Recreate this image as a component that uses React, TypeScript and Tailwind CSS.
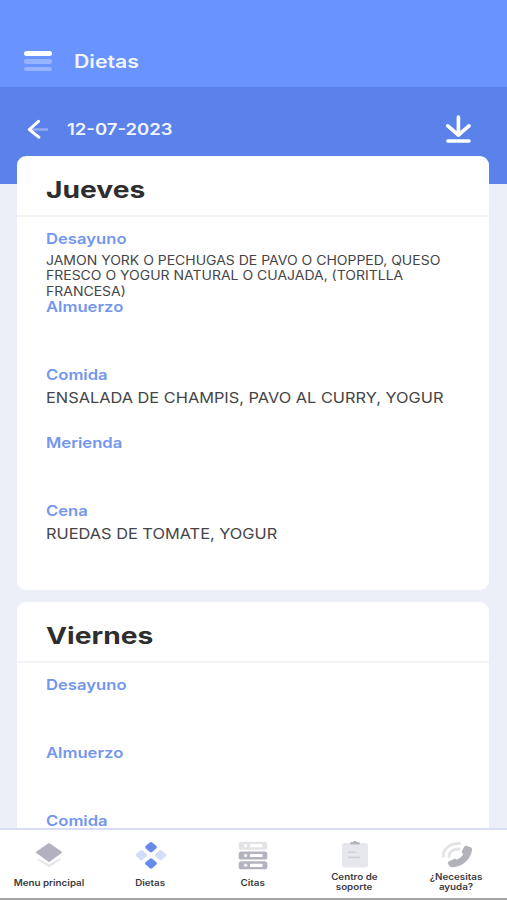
import type { ReactNode } from "react";
import clsx from "clsx";

type Meal = { name: string; lines?: string[]; small?: boolean };
type Day = { title: string; meals: Meal[] };

const DAYS: Day[] = [
  {
    title: "Jueves",
    meals: [
      {
        name: "Desayuno",
        small: true,
        lines: [
          "JAMON YORK O PECHUGAS DE PAVO O CHOPPED, QUESO",
          "FRESCO O YOGUR NATURAL O CUAJADA, (TORITLLA",
          "FRANCESA)",
        ],
      },
      { name: "Almuerzo" },
      { name: "Comida", lines: ["ENSALADA DE CHAMPIS, PAVO AL CURRY, YOGUR"] },
      { name: "Merienda" },
      { name: "Cena", lines: ["RUEDAS DE TOMATE, YOGUR"] },
    ],
  },
  {
    title: "Viernes",
    meals: [{ name: "Desayuno" }, { name: "Almuerzo" }, { name: "Comida" }],
  },
];

function MenuIcon() {
  return (
    <div className="flex w-7 flex-col gap-[3px]">
      <span className="h-[5px] rounded-full bg-white" />
      <span className="h-[4.5px] rounded-[2px] bg-white/30" />
      <span className="h-[4.5px] rounded-[2px] bg-white/30" />
    </div>
  );
}

function BackIcon() {
  return (
    <svg width="22" height="20" viewBox="0 0 22 20" fill="none" strokeLinecap="round" strokeLinejoin="round">
      <path d="M4 10.5H21.5" stroke="#fff" strokeOpacity=".35" strokeWidth="2.4" />
      <path d="M12.5 2.3L3.3 10.5L12.8 18.2" stroke="#fff" strokeWidth="3" />
    </svg>
  );
}

function DownloadIcon() {
  return (
    <svg width="26" height="28" viewBox="0 0 26 28" fill="none" stroke="#fff" strokeLinecap="round" strokeLinejoin="round">
      <path d="M13.4 2V20M2.8 10.8L13.4 20.2L24 10.8" strokeWidth="3.6" />
      <path d="M2.8 26H24" strokeWidth="3.4" />
    </svg>
  );
}

function LayersIcon() {
  return (
    <svg width="30" height="28" viewBox="0 0 30 28" strokeLinejoin="round">
      <path d="M3 18.8L15 26.2L27 18.8L25.5 17.4L15 23.4L4.5 17.4Z" fill="#e6e6ea" />
      <path d="M15 3L27 11.3L15 20L3 11.3Z" fill="#b3b1bf" stroke="#b3b1bf" strokeWidth="2" />
    </svg>
  );
}

function DiamondsIcon() {
  return (
    <svg width="32" height="28" viewBox="0 0 32 28" strokeWidth="3.6" strokeLinejoin="round">
      <path d="M16 2.8L20 6.2L16 9.6L12 6.2Z" fill="#668bed" stroke="#668bed" />
      <path d="M16 19L20 22.4L16 25.8L12 22.4Z" fill="#668bed" stroke="#668bed" />
      <path d="M6.4 10.9L10.2 14.2L6.4 17.5L2.6 14.2Z" fill="#d3ddf9" stroke="#d3ddf9" />
      <path d="M25.6 10.9L29.4 14.2L25.6 17.5L21.8 14.2Z" fill="#d3ddf9" stroke="#d3ddf9" />
    </svg>
  );
}

function ServerRow({ y, color }: { y: number; color: string }) {
  return (
    <g>
      <rect x="0.7" y={y} width="28.6" height="8" rx="2.6" fill={color} />
      <rect x="12" y={y + 2.4} width="12.5" height="3.2" rx="0.6" fill="#fff" />
      <circle cx="7.6" cy={y + 4} r="1.8" fill="#fff" fillOpacity=".8" />
    </g>
  );
}

function ServersIcon() {
  return (
    <svg width="30" height="28" viewBox="0 0 30 28" overflow="visible">
      <ServerRow y={0.7} color="#e3e3e7" />
      <ServerRow y={10.5} color="#b3b2bf" />
      <ServerRow y={20.3} color="#b3b2bf" />
    </svg>
  );
}

function ClipboardIcon() {
  return (
    <svg width="28" height="28" viewBox="0 0 28 28">
      <rect x="1" y="2" width="26" height="24.4" rx="2.6" fill="#e6e7ec" />
      <path d="M9.3 3.6V2.3Q9.3 1 10.6 1H12Q14 -1.2 16 1H17.4Q18.7 1 18.7 2.3V3.6Z" fill="#b2b3bb" />
      <path d="M7.5 11.2H14M7.5 16.4H18" stroke="#d0d1d8" strokeWidth="1.6" strokeLinecap="round" />
    </svg>
  );
}

function PhoneIcon() {
  return (
    <svg width="32" height="28" viewBox="0 0 32 28" fill="none">
      <path d="M2.2 15.4C2.2 7.6 8.7 2.4 18.6 2.4" stroke="#e2e3e7" strokeWidth="2.8" strokeLinecap="round" />
      <path d="M8 15.6C8 11 11.9 8 18 8" stroke="#e2e3e7" strokeWidth="2.8" strokeLinecap="round" />
      <path
        d="M25.4 4.8L29.6 6.3C30.8 6.8 31.2 7.8 31 9.2C29.4 18.8 21.6 25.6 11.4 26.2C9.8 26.3 8.8 25.8 8.2 24.8L7 22.8C6.5 21.8 6.8 21.1 7.8 20.6L12.4 18.2C13.6 17.6 14.4 17.8 15.4 18.6C18.6 17.6 20.8 15.8 22.2 13L21.4 12.2C20.7 11.5 20.6 10.8 21 9.9L23.2 5.7C23.7 4.8 24.4 4.5 25.4 4.8Z"
        fill="#b1b2ba"
      />
    </svg>
  );
}

function DayCard({ day }: { day: Day }) {
  return (
    <section className="h-[434px] shrink-0 rounded-[9px] bg-white">
      <h2 className="flex h-[61px] items-center border-b-2 border-[#f3f4f7] pt-[10px] pl-[29px] text-[23px] font-bold text-[#2e2e30]">
        <span className="origin-left scale-x-[1.225]">{day.title}</span>
      </h2>
      <div className="pt-[12.4px] pl-[29px]">
        {day.meals.map((meal) => (
          <div key={meal.name} className="h-[68px] whitespace-nowrap">
            <h3 className="h-5 w-fit origin-left scale-x-[1.14] text-[14.6px] leading-5 font-semibold text-[#7397ee]">
              {meal.name}
            </h3>
            <div className={clsx(meal.small && "pt-[3.6px]")}>
              {meal.lines?.map((line) => (
                <p
                  key={line}
                  className={clsx(
                    "w-fit origin-left text-[#454547]",
                    meal.small
                      ? "scale-x-[1.11] pt-px text-[12.6px] leading-[14.4px]"
                      : "scale-x-[1.09] pt-[0.6px] text-[15px] leading-6",
                  )}
                >
                  {line}
                </p>
              ))}
            </div>
          </div>
        ))}
      </div>
    </section>
  );
}

function NavItem({ icon, lines }: { icon: ReactNode; lines: string[] }) {
  return (
    <button className="flex w-[102px] shrink-0 flex-col items-center pt-[11px]">
      {icon}
      <span
        className={clsx(
          "flex flex-col items-center text-[8.6px] leading-[10px] font-semibold whitespace-nowrap text-[#3b3b3f]",
          lines.length > 1 ? "pt-[3px]" : "pt-[9px]",
        )}
      >
        {lines.map((line) => (
          <span key={line} className="scale-x-[1.14]">
            {line}
          </span>
        ))}
      </span>
    </button>
  );
}

export default function App() {
  return (
    <div className="flex h-[900px] w-[507px] flex-col overflow-hidden bg-[#eceff8] font-['Inter',sans-serif]">
      <header className="flex h-[87px] shrink-0 items-center bg-[#6993ff] pt-[35px] pl-[24px] text-[18px] font-semibold text-[#f1f5ff]">
        <MenuIcon />
        <span className="ml-[22px] origin-left scale-x-[1.18]">Dietas</span>
      </header>
      <div className="flex h-[97px] shrink-0 items-start bg-[#5b82ea] pr-[36px] pl-[26px] text-[16px] font-semibold text-[#f1f5ff]">
        <div className="flex h-[84px] flex-1 items-center">
          <BackIcon />
          <span className="ml-[19px] origin-left scale-x-[1.155]">12-07-2023</span>
          <span className="ml-auto">
            <DownloadIcon />
          </span>
        </div>
      </div>
      <main className="-mt-7 flex min-h-0 flex-1 flex-col gap-3 overflow-hidden pr-[18px] pl-[17px]">
        {DAYS.map((day) => (
          <DayCard key={day.title} day={day} />
        ))}
      </main>
      <nav className="flex h-[72px] shrink-0 border-t-2 border-b-2 border-t-[#d9def7] border-b-[#a5a5a5] bg-white">
        <div className="-ml-[2.5px] flex">
          <NavItem icon={<LayersIcon />} lines={["Menu principal"]} />
          <NavItem icon={<DiamondsIcon />} lines={["Dietas"]} />
          <NavItem icon={<ServersIcon />} lines={["Citas"]} />
          <NavItem icon={<ClipboardIcon />} lines={["Centro de", "soporte"]} />
          <NavItem icon={<PhoneIcon />} lines={["¿Necesitas", "ayuda?"]} />
        </div>
      </nav>
    </div>
  );
}
